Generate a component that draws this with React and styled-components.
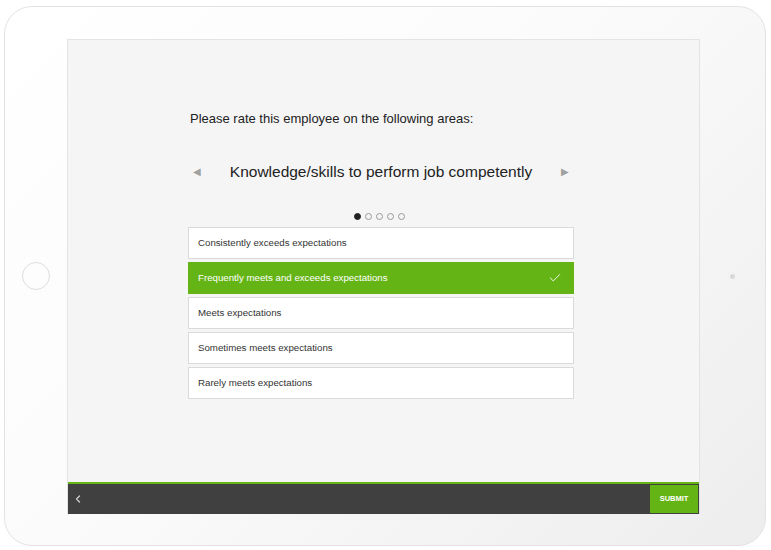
import React from "react";
import styled, { createGlobalStyle } from "styled-components";
import { Check, ChevronLeft } from "lucide-react";

const green = "#65b416";

const GlobalStyle = createGlobalStyle`
  html, body {
    margin: 0;
    padding: 0;
    background: #ffffff;
  }
  body {
    font-family: "Liberation Sans", Arial, sans-serif;
  }
`;

const Page = styled.div`
  width: 771px;
  height: 550px;
  padding: 6px 0 0 4px;
  box-sizing: border-box;
`;

// tablet body, bezels either side of the screen
const Tablet = styled.div`
  width: 762px;
  height: 540px;
  box-sizing: border-box;
  border: 1px solid #e3e3e3;
  border-radius: 28px;
  background: linear-gradient(135deg, #ffffff 0%, #fbfbfb 45%, #ededed 100%);
  display: flex;
  align-items: center;
`;

const Bezel = styled.div`
  width: ${({ w }) => w}px;
  display: flex;
  justify-content: center;
  align-items: center;
`;

const HomeButton = styled.div`
  width: 28px;
  height: 28px;
  border-radius: 50%;
  border: 1.5px solid #dedede;
  box-sizing: border-box;
`;

const Camera = styled.div`
  width: 5px;
  height: 5px;
  border-radius: 50%;
  background: #d8d8d8;
`;

const Screen = styled.div`
  width: 633px;
  height: 475px;
  box-sizing: border-box;
  border: 1px solid #e4e4e4;
  border-bottom: none;
  background: #f5f5f5;
  display: flex;
  flex-direction: column;
`;

const Content = styled.div`
  flex: 1;
  padding: 71px 0 0 120px;
`;

const Column = styled.div`
  width: 386px;
  display: flex;
  flex-direction: column;
`;

const Title = styled.div`
  font-size: 13px;
  line-height: 16px;
  color: #222;
  padding-left: 2px;
`;

const Heading = styled.div`
  margin-top: 35px;
  display: flex;
  align-items: center;
  justify-content: space-between;
  padding: 0 5px;
  font-size: 15.5px;
  line-height: 20px;
  color: #222;
`;

const Arrow = styled.span`
  font-size: 10px;
  color: #a0a0a0;
`;

const Dots = styled.div`
  margin-top: 31px;
  display: flex;
  justify-content: center;
  gap: 4px;
  height: 7px;
  padding-right: 3px;
`;

const Dot = styled.span`
  width: 7px;
  height: 7px;
  box-sizing: border-box;
  border-radius: 50%;
  border: 1px solid ${({ active }) => (active ? "#222" : "#999")};
  background: ${({ active }) => (active ? "#222" : "transparent")};
`;

const Options = styled.div`
  margin-top: 7px;
  display: flex;
  flex-direction: column;
  gap: 3px;
`;

const Option = styled.div`
  height: 32px;
  box-sizing: border-box;
  padding: 0 11px 0 9px;
  display: flex;
  align-items: center;
  justify-content: space-between;
  font-size: 9.7px;
  border: 1px solid ${({ selected }) => (selected ? green : "#dadada")};
  background: ${({ selected }) => (selected ? green : "#ffffff")};
  color: ${({ selected }) => (selected ? "#ffffff" : "#333")};
`;

const Footer = styled.div`
  height: 32px;
  box-sizing: border-box;
  border-top: 2px solid ${green};
  background: #404040;
  display: flex;
  align-items: stretch;
  justify-content: space-between;
  padding: 1px 1px 1px 0;
`;

const Back = styled.div`
  width: 20px;
  display: flex;
  align-items: center;
  justify-content: center;
  color: #cfcfcf;
`;

const Submit = styled.div`
  width: 48px;
  background: ${green};
  color: #fff;
  font-size: 7.5px;
  font-weight: bold;
  display: flex;
  align-items: center;
  justify-content: center;
`;

const ratings = [
  "Consistently exceeds expectations",
  "Frequently meets and exceeds expectations",
  "Meets expectations",
  "Sometimes meets expectations",
  "Rarely meets expectations",
];

export default function App() {
  const selected = 1;
  return (
    <>
      <GlobalStyle />
      <Page>
        <Tablet>
          <Bezel w={62}>
            <HomeButton />
          </Bezel>
          <Screen>
            <Content>
              <Column>
                <Title>Please rate this employee on the following areas:</Title>
                <Heading>
                  <Arrow>◀</Arrow>
                  <span>Knowledge/skills to perform job competently</span>
                  <Arrow>▶</Arrow>
                </Heading>
                <Dots>
                  {[0, 1, 2, 3, 4].map((i) => (
                    <Dot key={i} active={i === 0} />
                  ))}
                </Dots>
                <Options>
                  {ratings.map((r, i) => (
                    <Option key={r} selected={i === selected}>
                      <span>{r}</span>
                      {i === selected && <Check size={14} strokeWidth={1.5} />}
                    </Option>
                  ))}
                </Options>
              </Column>
            </Content>
            <Footer>
              <Back>
                <ChevronLeft size={12} strokeWidth={2.5} />
              </Back>
              <Submit>SUBMIT</Submit>
            </Footer>
          </Screen>
          <Bezel w={65}>
            <Camera />
          </Bezel>
        </Tablet>
      </Page>
    </>
  );
}
